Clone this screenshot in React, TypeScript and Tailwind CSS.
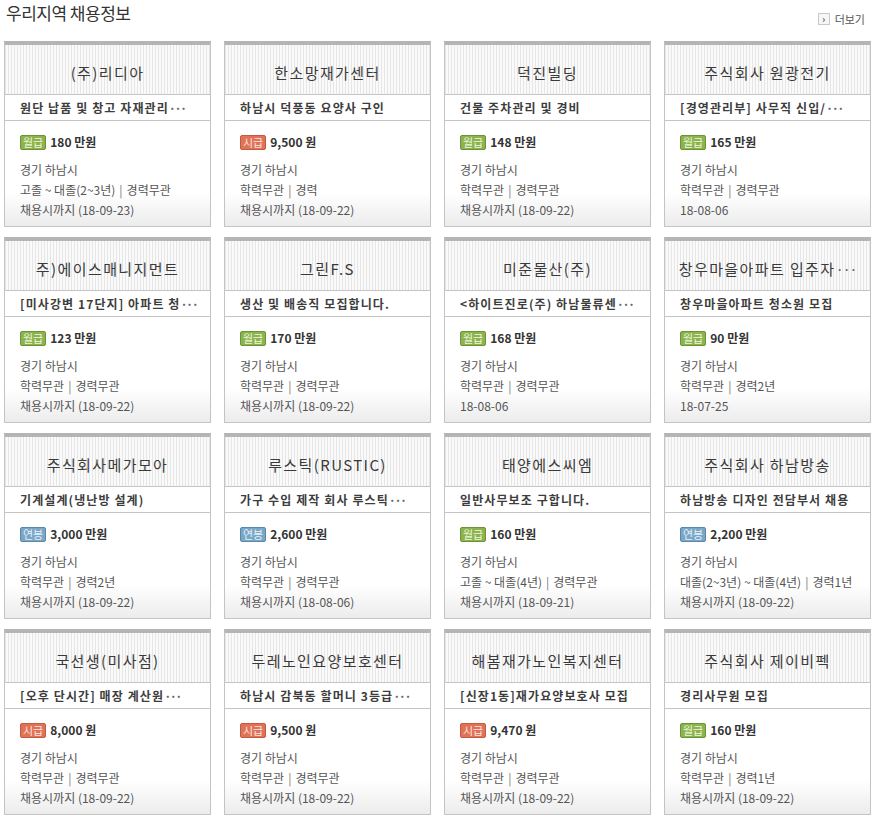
import React from "react";

type Pay = "월급" | "시급" | "연봉";
type Job = {
  company: string;
  title: string;
  pay: Pay;
  amount: string;
  edu: string;
  exp: string;
  date: string;
};

const jobs: Job[] = [
  { company: "(주)리디아", title: "원단 납품 및 창고 자재관리···", pay: "월급", amount: "180 만원", edu: "고졸 ~ 대졸(2~3년)", exp: "경력무관", date: "채용시까지 (18-09-23)" },
  { company: "한소망재가센터", title: "하남시 덕풍동 요양사 구인", pay: "시급", amount: "9,500 원", edu: "학력무관", exp: "경력", date: "채용시까지 (18-09-22)" },
  { company: "덕진빌딩", title: "건물 주차관리 및 경비", pay: "월급", amount: "148 만원", edu: "학력무관", exp: "경력무관", date: "채용시까지 (18-09-22)" },
  { company: "주식회사 원광전기", title: "[경영관리부] 사무직 신입/···", pay: "월급", amount: "165 만원", edu: "학력무관", exp: "경력무관", date: "18-08-06" },
  { company: "주)에이스매니지먼트", title: "[미사강변 17단지] 아파트 청···", pay: "월급", amount: "123 만원", edu: "학력무관", exp: "경력무관", date: "채용시까지 (18-09-22)" },
  { company: "그린F.S", title: "생산 및 배송직 모집합니다.", pay: "월급", amount: "170 만원", edu: "학력무관", exp: "경력무관", date: "채용시까지 (18-09-22)" },
  { company: "미준물산(주)", title: "<하이트진로(주) 하남물류센···", pay: "월급", amount: "168 만원", edu: "학력무관", exp: "경력무관", date: "18-08-06" },
  { company: "창우마을아파트 입주자···", title: "창우마을아파트 청소원 모집", pay: "월급", amount: "90 만원", edu: "학력무관", exp: "경력2년", date: "18-07-25" },
  { company: "주식회사메가모아", title: "기계설계(냉난방 설계)", pay: "연봉", amount: "3,000 만원", edu: "학력무관", exp: "경력2년", date: "채용시까지 (18-09-22)" },
  { company: "루스틱(RUSTIC)", title: "가구 수입 제작 회사 루스틱···", pay: "연봉", amount: "2,600 만원", edu: "학력무관", exp: "경력무관", date: "채용시까지 (18-08-06)" },
  { company: "태양에스씨엠", title: "일반사무보조 구합니다.", pay: "월급", amount: "160 만원", edu: "고졸 ~ 대졸(4년)", exp: "경력무관", date: "채용시까지 (18-09-21)" },
  { company: "주식회사 하남방송", title: "하남방송 디자인 전담부서 채용", pay: "연봉", amount: "2,200 만원", edu: "대졸(2~3년) ~ 대졸(4년)", exp: "경력1년", date: "채용시까지 (18-09-22)" },
  { company: "국선생(미사점)", title: "[오후 단시간] 매장 계산원···", pay: "시급", amount: "8,000 원", edu: "학력무관", exp: "경력무관", date: "채용시까지 (18-09-22)" },
  { company: "두레노인요양보호센터", title: "하남시 감북동 할머니 3등급···", pay: "시급", amount: "9,500 원", edu: "학력무관", exp: "경력무관", date: "채용시까지 (18-09-22)" },
  { company: "해봄재가노인복지센터", title: "[신장1동]재가요양보호사 모집", pay: "시급", amount: "9,470 원", edu: "학력무관", exp: "경력무관", date: "채용시까지 (18-09-22)" },
  { company: "주식회사 제이비펙", title: "경리사무원 모집", pay: "월급", amount: "160 만원", edu: "학력무관", exp: "경력1년", date: "채용시까지 (18-09-22)" },
];

function Trunc({ text }: { text: string }) {
  if (text.endsWith("···")) {
    return (
      <>
        {text.slice(0, -3)}
        <span className="tracking-[-1.5px] text-[#666]">···</span>
      </>
    );
  }
  return <>{text}</>;
}

function Badge({ pay }: { pay: Pay }) {
  if (pay === "시급") {
    return (
      <span className="inline-flex h-[15px] items-center rounded-[2px] border border-[#c45a40] bg-[#e07258] px-[2px] text-[11px] leading-none text-[#fde6de]">
        시급
      </span>
    );
  }
  if (pay === "연봉") {
    return (
      <span className="inline-flex h-[15px] items-center rounded-[2px] border border-[#5a88ab] bg-[#7ba7c7] px-[2px] text-[11px] leading-none text-[#e3f0fa]">
        연봉
      </span>
    );
  }
  return (
    <span className="inline-flex h-[15px] items-center rounded-[2px] border border-[#6c9336] bg-[#8db34f] px-[2px] text-[11px] leading-none text-[#eef7dc]">
      월급
    </span>
  );
}

function Card({ job }: { job: Job }) {
  return (
    <div className="flex h-[186px] w-[207px] flex-col border border-t-4 border-[#c4c4c4] border-t-[#b5b5b5]">
      <div className="flex h-[50px] items-center justify-center overflow-hidden whitespace-nowrap border-b border-[#c4c4c4] bg-[image:repeating-linear-gradient(90deg,#e6e6e6_0px,#e6e6e6_1px,#fafafa_1px,#fafafa_3px)] pt-[7px] text-[15px] tracking-[1.4px] text-[#3a3a3a]">
        <Trunc text={job.company} />
      </div>
      <div className="flex h-[26px] items-center overflow-hidden whitespace-nowrap border-b border-[#c4c4c4] bg-white px-[15px] text-[12px] font-bold tracking-[1.1px] text-[#3d3d3d]">
        <Trunc text={job.title} />
      </div>
      <div className="flex flex-1 flex-col bg-[linear-gradient(to_bottom,#ffffff_68%,#ececec)] px-[15px] pt-[13px] text-[12px] text-[#555]">
        <div className="flex h-[16px] items-center gap-[4px]">
          <Badge pay={job.pay} />
          <span className="font-bold text-[#333]">{job.amount}</span>
        </div>
        <div className="mt-[10px] leading-[20px]">
          <div>경기 하남시</div>
          <div className="whitespace-nowrap">
            {job.edu}
            <span className="mx-[4px] text-[#777]">|</span>
            {job.exp}
          </div>
          <div>{job.date}</div>
        </div>
      </div>
    </div>
  );
}

export default function App() {
  return (
    <div
      className="w-[874px] bg-white pl-[4px]"
      style={{ fontFamily: '"Noto Sans CJK KR", "Noto Sans", sans-serif' }}
    >
      <div className="flex h-[41px] items-start justify-between">
        <h1 className="pl-[2px] pt-[1px] text-[17px] leading-[24px] tracking-[-0.5px] text-[#333]">우리지역 채용정보</h1>
        <div className="mr-[9px] mt-[13px] flex items-center gap-[5px]">
          <span className="flex h-[12px] w-[12px] items-center justify-center border border-[#c8c8c8] bg-[#f6f6f6] text-[9px] font-bold leading-none text-[#555]">
            ›
          </span>
          <span className="text-[11px] leading-none text-[#555]">더보기</span>
        </div>
      </div>
      <div className="grid grid-cols-[repeat(4,207px)] gap-x-[13px] gap-y-[10px]">
        {jobs.map((j, i) => (
          <Card key={i} job={j} />
        ))}
      </div>
    </div>
  );
}
